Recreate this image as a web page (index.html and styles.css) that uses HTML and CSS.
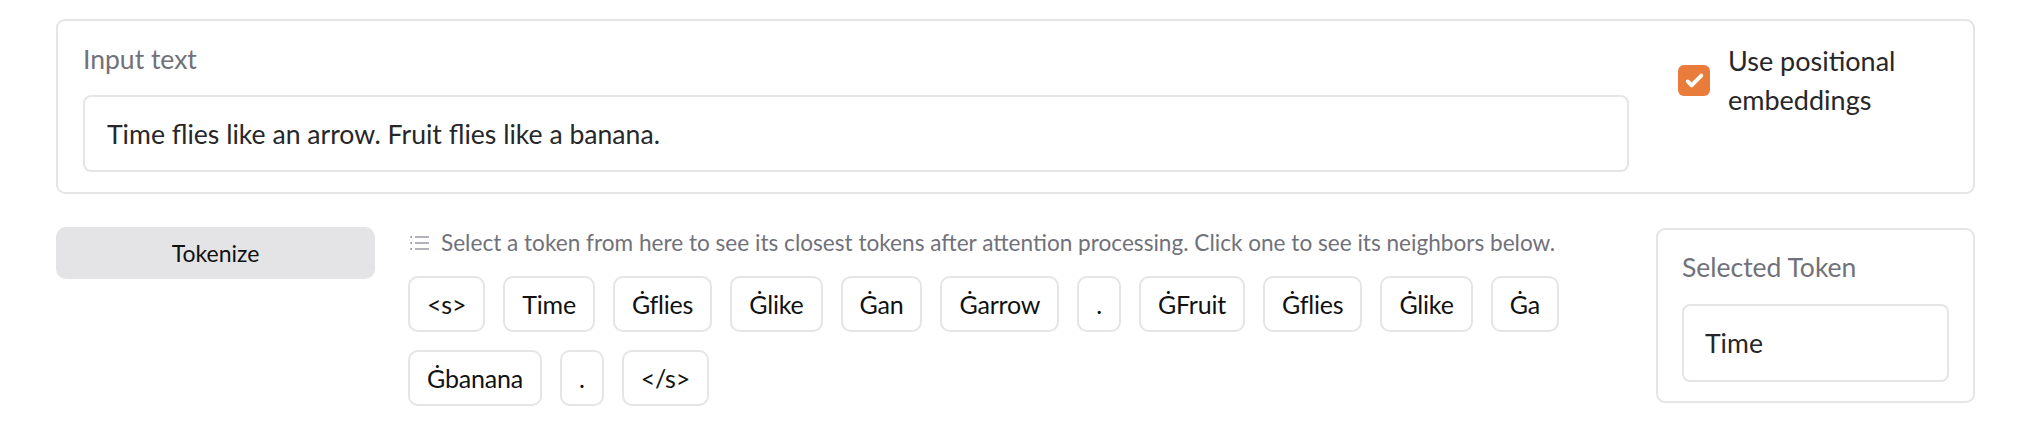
FILE: index.html
```html
<!DOCTYPE html>
<html>
<head>
<meta charset="utf-8">
<link rel="stylesheet" href="styles.css">
</head>
<body>
<div class="page">
  <div class="panel panel-top">
    <div class="field">
      <div class="label">Input text</div>
      <div class="input input-main">Time flies like an arrow. Fruit flies like a banana.</div>
    </div>
    <label class="check">
      <span class="box">
        <svg viewBox="0 0 16 16" width="31" height="31"><path fill="#fff" d="M12.207 4.793a1 1 0 010 1.414l-5 5a1 1 0 01-1.414 0l-2-2a1 1 0 011.414-1.414L6.5 9.086l4.293-4.293a1 1 0 011.414 0z"/></svg>
      </span>
      <span class="check-text">Use positional embeddings</span>
    </label>
  </div>
  <div class="row">
    <div class="side">
      <button class="btn">Tokenize</button>
    </div>
    <div class="mid">
      <div class="hint">
        <svg class="hint-icon" viewBox="0 0 20 18" width="20" height="18">
          <circle cx="1.2" cy="3" r="0.9" fill="#8a8a96"/>
          <circle cx="1.2" cy="9" r="0.9" fill="#8a8a96"/>
          <circle cx="1.2" cy="15" r="0.9" fill="#8a8a96"/>
          <line x1="5" y1="3" x2="19" y2="3" stroke="#8a8a96" stroke-width="1.3"/>
          <line x1="5" y1="9" x2="19" y2="9" stroke="#8a8a96" stroke-width="1.3"/>
          <line x1="5" y1="15" x2="19" y2="15" stroke="#8a8a96" stroke-width="1.3"/>
        </svg>
        <span>Select a token from here to see its closest tokens after attention processing. Click one to see its neighbors below.</span>
      </div>
      <div class="tokens">
        <span class="chip">&lt;s&gt;</span>
        <span class="chip">Time</span>
        <span class="chip">Ġflies</span>
        <span class="chip">Ġlike</span>
        <span class="chip">Ġan</span>
        <span class="chip">Ġarrow</span>
        <span class="chip">.</span>
        <span class="chip">ĠFruit</span>
        <span class="chip">Ġflies</span>
        <span class="chip">Ġlike</span>
        <span class="chip">Ġa</span>
        <span class="chip">Ġbanana</span>
        <span class="chip">.</span>
        <span class="chip">&lt;/s&gt;</span>
      </div>
    </div>
    <div class="side">
      <div class="panel panel-sel">
        <div class="label">Selected Token</div>
        <div class="input input-sel">Time</div>
      </div>
    </div>
  </div>
</div>
</body>
</html>
```
FILE: styles.css
```css
* { box-sizing: border-box; }
html, body { margin: 0; padding: 0; background: #fff; }
body { font-family: Lato, "Noto Sans", sans-serif; color: #27272a; }

.page {
  padding: 19px 61px 0 56px;
  display: flex;
  flex-direction: column;
  gap: 33px;
}

.panel {
  border: 2px solid #e5e5e5;
  border-radius: 9px;
  background: #fff;
}

.panel-top {
  display: flex;
  gap: 49px;
  padding: 20px 26px 20px 25px;
}

.field { flex: 1; display: flex; flex-direction: column; }

.label {
  font-size: 26.5px;
  line-height: 36px;
  color: #71717a;
  margin-bottom: 18px;
}

.input {
  border: 2px solid #e5e5e5;
  border-radius: 8px;
  display: flex;
  align-items: center;
  font-size: 26.6px;
  color: #27272a;
}

.input-main { height: 77px; padding: 0 22px; }

.check {
  width: 269px;
  display: flex;
  align-items: center;
  gap: 18px;
  margin-top: 0;
  align-self: flex-start;
}

.box {
  width: 32px;
  height: 31px;
  flex: none;
  border-radius: 6px;
  background: #e97c3b;
  display: flex;
  align-items: center;
  justify-content: center;
}

.check-text {
  font-size: 27px;
  line-height: 39px;
  color: #27272a;
}

.row { display: flex; gap: 33px; align-items: flex-start; }

.side { width: 319px; flex: none; }

.btn {
  width: 100%;
  height: 52px;
  border: none;
  border-radius: 10px;
  background: #e4e4e7;
  font-family: Lato, "Noto Sans", sans-serif;
  font-size: 23px;
  color: #111;
  padding: 0;
}

.mid { flex: 1; display: flex; flex-direction: column; gap: 17px; }

.hint {
  display: flex;
  align-items: center;
  font-size: 22.6px;
  line-height: 32px;
  color: #71717a;
  padding-left: 2px;
}

.hint-icon { margin-right: 11px; flex: none; }

.tokens { display: flex; flex-wrap: wrap; gap: 18px; }

.chip {
  height: 56px;
  padding: 0 17px;
  border: 2px solid #e5e5e5;
  border-radius: 10px;
  display: flex;
  align-items: center;
  font-size: 25px;
  letter-spacing: -0.2px;
  color: #111;
  background: #fff;
}

.panel-sel {
  padding: 19px 24px 19px 24px;
  margin-top: 1px;
}

.panel-sel .label { margin-bottom: 19px; }

.input-sel { height: 78px; padding: 0 21px; }
```
